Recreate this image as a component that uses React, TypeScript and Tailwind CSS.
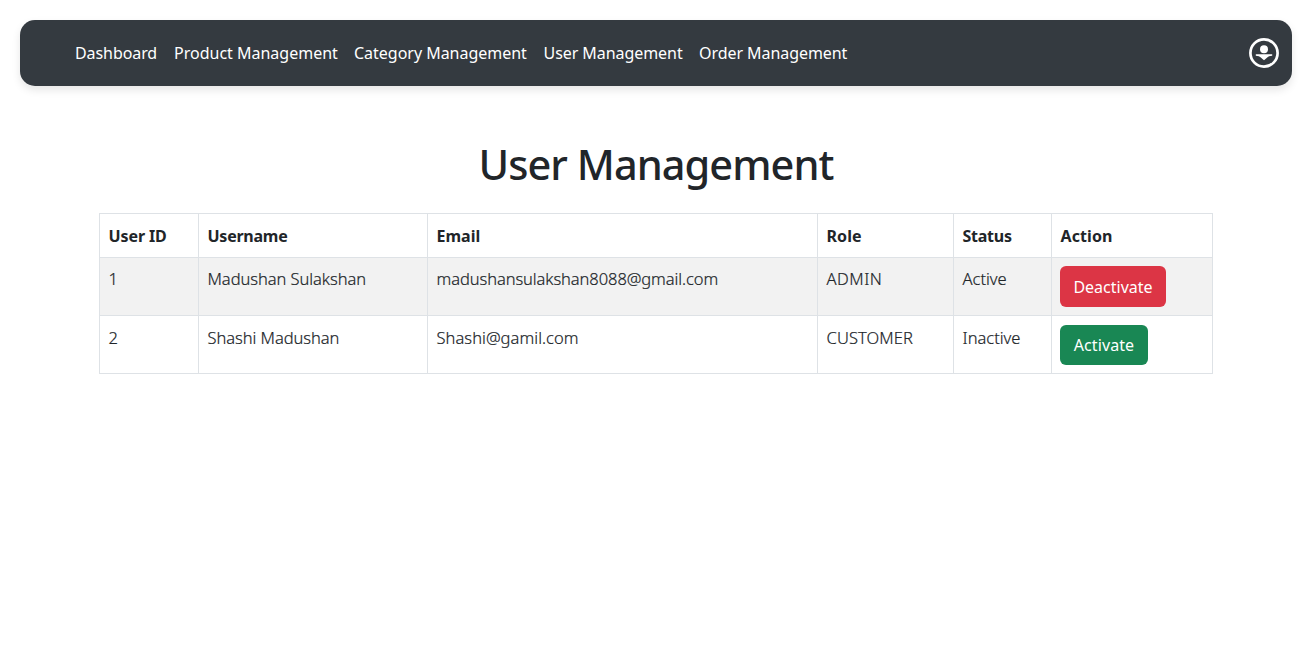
const navItems = [
  { label: "Dashboard", style: "w-[99px] tracking-[-0.08px]" },
  { label: "Product Management", style: "w-[180px]" },
  { label: "Category Management", style: "w-[189.5px] tracking-[-0.02px]" },
  { label: "User Management", style: "w-[155.5px] tracking-[-0.06px]" },
  { label: "Order Management", style: "tracking-[-0.06px]" },
];

const columns = [
  { label: "User ID", width: "w-[99px]", tracking: "tracking-[-0.1px]" },
  { label: "Username", width: "w-[229px]", tracking: "tracking-[-0.25px]" },
  { label: "Email", width: "w-[390px]", tracking: "" },
  { label: "Role", width: "w-[136px]", tracking: "tracking-[0.1px]" },
  { label: "Status", width: "w-[98px]", tracking: "tracking-[-0.25px]" },
  { label: "Action", width: "w-[161px]", tracking: "tracking-[0.1px]" },
];

const users = [
  {
    id: 1,
    name: "Madushan Sulakshan",
    email: "madushansulakshan8088@gmail.com",
    emailTracking: "tracking-[-0.08px]",
    role: "ADMIN",
    roleTracking: "tracking-[0.5px]",
    active: true,
  },
  {
    id: 2,
    name: "Shashi Madushan",
    email: "Shashi@gamil.com",
    emailTracking: "tracking-[0.05px]",
    role: "CUSTOMER",
    roleTracking: "tracking-[0.1px]",
    active: false,
  },
];

function ProfileIcon() {
  return (
    <svg width="30" height="30" viewBox="0 0 30 30" fill="none" aria-hidden="true">
      <circle cx="15" cy="15" r="13.6" stroke="white" strokeWidth="2.7" />
      <circle cx="15" cy="11.2" r="4" fill="white" />
      <path d="M6.8 16.3H23.2V17.8Q19.5 18 18.2 19.6Q17 20.8 15 22.2Q13 20.8 11.8 19.6Q10.5 18 6.8 17.8Z" fill="white" />
    </svg>
  );
}

function NavBar() {
  return (
    <nav className="mx-5 flex h-[66px] items-center justify-between rounded-[15px] bg-[#343a40] pr-[13px] pl-[55px] shadow-[0_4px_8px_rgba(0,0,0,0.1)]">
      <div className="flex leading-6 text-white">
        {navItems.map((item) => (
          <a key={item.label} href="#" className={`whitespace-nowrap ${item.style}`}>
            {item.label}
          </a>
        ))}
      </div>
      <ProfileIcon />
    </nav>
  );
}

export default function App() {
  return (
    <div className="min-h-screen bg-white pt-5 font-['Noto_Sans',sans-serif] text-[16px] text-[#212529]">
      <NavBar />
      <main className="mx-[99px] pt-[52px]">
        <h1 className="mb-[23px] text-center text-[41.5px] leading-[52px] font-medium tracking-[-0.95px]">User Management</h1>
        <table className="w-[1114px] table-fixed border-collapse">
          <thead>
            <tr className="h-[44px]">
              {columns.map((c) => (
                <th key={c.label} className={`border border-[#dee2e6] py-0 pr-2 pl-[8.5px] text-left leading-6 font-bold ${c.width} ${c.tracking}`}>
                  {c.label}
                </th>
              ))}
            </tr>
          </thead>
          <tbody className="text-[16.5px] leading-6 font-light [-webkit-text-stroke:0.2px_#212529]">
            {users.map((u) => {
              const cell = `border border-[#dee2e6] pr-2 pb-0 pl-[8.5px] align-top ${u.active ? "pt-[9px]" : "pt-[10px]"}`;
              return (
                <tr key={u.id} className="h-[58px] odd:bg-[#f2f2f2]">
                  <td className={cell}>{u.id}</td>
                  <td className={`${cell} tracking-[-0.05px]`}>{u.name}</td>
                  <td className={`${cell} ${u.emailTracking}`}>{u.email}</td>
                  <td className={`${cell} ${u.roleTracking}`}>{u.role}</td>
                  <td className={cell}>{u.active ? "Active" : "Inactive"}</td>
                  <td className={`border border-[#dee2e6] px-2 pb-0 align-top ${u.active ? "pt-2" : "pt-[9px]"}`}>
                    <button
                      className={`block rounded-md text-[16px] font-normal text-white [-webkit-text-stroke:0px] ${
                        u.active ? "h-[41px] w-[106px] bg-[#dc3545]" : "h-10 w-[88px] bg-[#198754] tracking-[0.1px]"
                      }`}
                    >
                      {u.active ? "Deactivate" : "Activate"}
                    </button>
                  </td>
                </tr>
              );
            })}
          </tbody>
        </table>
      </main>
    </div>
  );
}
